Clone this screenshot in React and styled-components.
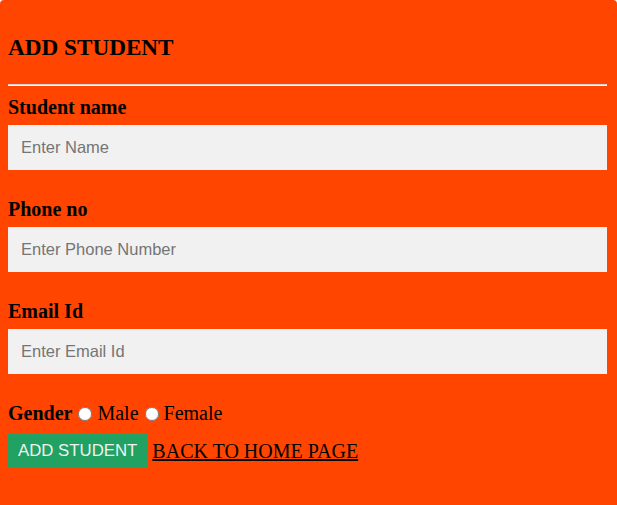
import React from 'react';
import styled, { createGlobalStyle } from 'styled-components';

const GlobalStyle = createGlobalStyle`
    html, body {
        margin: 0;
        padding: 0;
        background: #fff;
    }
    body {
        font-family: "Liberation Serif", "Times New Roman", serif;
    }
`;

function App() {
    return (
        <>
            <GlobalStyle />
            <FormContainer>
                <FormTitle>ADD STUDENT</FormTitle>
                <Divider />
                <FieldLabel htmlFor="name">Student name</FieldLabel>
                <FieldInput id="name" type="text" placeholder="Enter Name" />
                <FieldLabel htmlFor="phone">Phone no</FieldLabel>
                <FieldInput id="phone" type="text" placeholder="Enter Phone Number" />
                <FieldLabel htmlFor="email">Email Id</FieldLabel>
                <FieldInput id="email" type="text" placeholder="Enter Email Id" />
                <GenderRow>
                    <b>Gender</b>{' '}
                    <Radio type="radio" name="gender" id="male" />{' '}
                    <label htmlFor="male">Male</label>{' '}
                    <Radio type="radio" name="gender" id="female" />{' '}
                    <label htmlFor="female">Female</label>
                </GenderRow>
                <ActionRow>
                    <SubmitButton type="button">ADD STUDENT</SubmitButton>{' '}
                    <HomeLink href="#">BACK TO HOME PAGE</HomeLink>
                </ActionRow>
            </FormContainer>
        </>
    );
}

export const FormContainer = styled.div`
    min-height: calc(100vh + 20px);
    box-sizing: border-box;
    background: #ff4500;
    border-radius: 4px;
    padding: 1px 10px 0 8px;
    color: #000;
`;

export const FormTitle = styled.h2`
    font-size: 23.2px;
    line-height: 26px;
    font-weight: bold;
    margin: 33px 0 24px 0;
`;

export const Divider = styled.hr`
    margin: 0 0 10px 0;
    height: 0;
    border: none;
    border-top: 1px solid #d4d4d4;
    border-bottom: 1px solid #f4f4f4;
`;

export const FieldLabel = styled.label`
    display: block;
    font-size: 20px;
    line-height: 22px;
    font-weight: bold;
    margin-bottom: 7px;
`;

export const FieldInput = styled.input`
    display: block;
    width: 100%;
    height: 45px;
    box-sizing: border-box;
    padding: 0 13px;
    margin: 0 0 28px 0;
    border: none;
    outline: none;
    background: #f1f1f1;
    font-family: "Liberation Sans", Arial, sans-serif;
    font-size: 16.5px;
    color: #000;

    &::placeholder {
        color: #757575;
    }
`;

export const GenderRow = styled.div`
    font-size: 20px;
    line-height: 22px;
    margin-bottom: 10px;
`;

export const Radio = styled.input`
    width: 14px;
    height: 14px;
    margin: 0 0 0 1px;
    vertical-align: -1px;
`;

export const ActionRow = styled.div`
    font-size: 20px;
    line-height: 34px;
`;

export const SubmitButton = styled.button`
    display: inline-block;
    vertical-align: top;
    height: 34px;
    padding: 0 10px;
    border: none;
    background: #21a262;
    color: #f1f1f1;
    font-family: "Liberation Sans", Arial, sans-serif;
    font-size: 16.8px;
    cursor: pointer;
`;

export const HomeLink = styled.a`
    color: #000;
    text-decoration: underline;
`;

export default App;
